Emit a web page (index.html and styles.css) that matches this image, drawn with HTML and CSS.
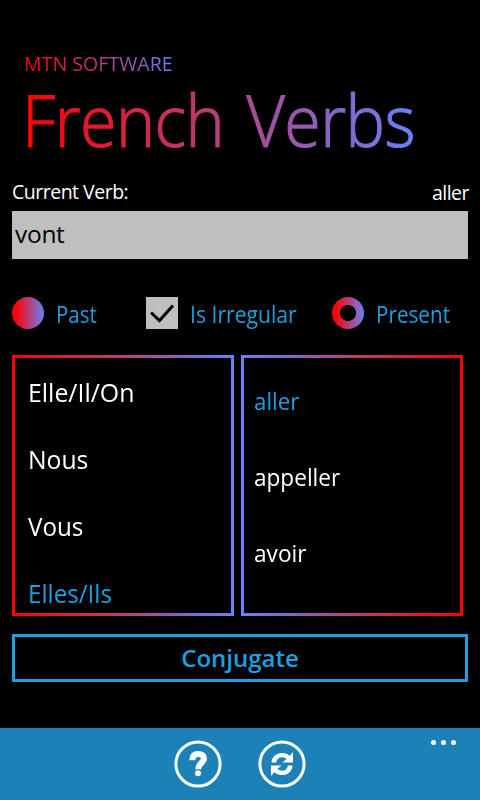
FILE: index.html
```html
<!DOCTYPE html>
<html lang="en">
<head>
<meta charset="utf-8">
<title>French Verbs</title>
<link rel="stylesheet" href="styles.css">
</head>
<body>
<main class="page">
  <header class="header">
    <div class="brand">MTN SOFTWARE</div>
    <h1 class="title">French Verbs</h1>
  </header>
  <div class="labels"><span class="label">Current Verb:</span><span class="current">aller</span></div>
  <div class="field"><span class="field-text">vont</span></div>
  <div class="options">
    <div class="option past"><span class="radio"></span><span class="t-past">Past</span></div>
    <div class="option irregular">
      <svg class="check" viewBox="0 0 32 32"><path d="M5 15.5 13.5 23.5 27 8.5" fill="none" stroke="#000" stroke-width="3"/></svg>
      <span class="t-irregular">Is Irregular</span>
    </div>
    <div class="option"><span class="radio ring"></span><span class="t-present">Present</span></div>
  </div>
  <div class="lists">
    <ul class="list pronouns">
      <li class="p1">Elle/Il/On</li><li class="p2">Nous</li><li class="p3">Vous</li><li class="p4 selected">Elles/Ils</li>
    </ul>
    <ul class="list verbs">
      <li class="v1 selected">aller</li><li class="v2">appeller</li><li class="v3">avoir</li>
    </ul>
  </div>
  <div class="button"><span>Conjugate</span></div>
</main>
<footer class="appbar">
  <svg class="icon" viewBox="0 0 48 48"><circle cx="24" cy="24" r="22.1" fill="none" stroke="#fff" stroke-width="3"/><path d="M18.300 20.200C18.400 15.800 20.600 13.900 24.200 13.900C28 13.900 30 15.700 30 18.500C30 23 24.200 22.800 24.200 29.300" fill="none" stroke="#fff" stroke-width="6"/><circle cx="24" cy="33.300" r="3" fill="#fff"/></svg>
  <svg class="icon" viewBox="0 0 48 48"><circle cx="24" cy="24" r="22.1" fill="none" stroke="#fff" stroke-width="3"/><g id="arrow" fill="#fff"><path d="M13.500 22.600C13.800 16.600 18.500 13 24 13C27.200 13 30 14.200 31.800 15.800L35 12V22.500H24.300L28.600 19.200C27.400 18 26 17.300 24 17.300C20.800 17.300 18.600 19.300 18.200 22.600Z"/></g><use href="#arrow" transform="rotate(180 24 24)"/></svg>
  <div class="dots"><i></i><i></i><i></i></div>
</footer>
</body>
</html>
```
FILE: styles.css
```css
* { box-sizing: border-box; }
body {
  margin: 0;
  width: 480px;
  height: 800px;
  display: flex;
  flex-direction: column;
  background: #000;
  color: #fff;
  font-family: "Open Sans", "Noto Sans", sans-serif;
  white-space: nowrap;
  overflow: hidden;
}
.page { flex: 1; padding: 50px 12px 0; }
.header { height: 128px; padding-left: 12px; display: flex; flex-direction: column; align-items: flex-start; }
.brand, .title {
  background: linear-gradient(90deg, #f00, #6a80f8);
  -webkit-background-clip: text;
  background-clip: text;
  color: transparent;
}
.brand { font-size: 19.6px; line-height: 28px; }
.title {
  margin: 2px 0 0 -2px;
  font-size: 71px;
  line-height: 80px;
  font-weight: 300;
  letter-spacing: -0.6px;
  word-spacing: 6px;
  -webkit-text-stroke: 1.2px transparent;
  transform: scaleX(0.935);
  transform-origin: left;
}
.labels { display: flex; justify-content: space-between; height: 33px; font-size: 19.5px; line-height: 28px; }
.label { letter-spacing: -0.5px; }
.current { padding-top: 1px; letter-spacing: -0.5px; margin-right: -1px; }
.field { height: 48px; padding-left: 3px; background: #bfbfbf; color: #000; font-size: 24.5px; line-height: 45px; letter-spacing: -0.3px; }
.options { display: flex; margin-top: 38px; height: 32px; color: #1ba1e2; font-size: 23.5px; line-height: 34px; }
.option { display: flex; gap: 12px; }
.past { width: 134px; }
.irregular { width: 186px; }
.radio { width: 32px; height: 32px; border-radius: 50%; background: linear-gradient(90deg, #f00 10%, #6a80f8); }
.ring { background: radial-gradient(circle, #000 7.700px, transparent 8.300px), linear-gradient(90deg, #f00 10%, #6a80f8); }
.check { width: 32px; height: 32px; background: #bfbfbf; }
.t-past, .t-irregular, .t-present, .list li { transform-origin: left; }
.t-past { transform: scaleX(0.87); }
.t-irregular { transform: scaleX(0.9); }
.t-present { transform: scaleX(0.88); }
.lists { display: flex; gap: 7px; margin-top: 26px; }
.list {
  width: 222px;
  height: 261px;
  margin: 0;
  list-style: none;
  overflow: hidden;
  border: 3px solid;
}
.pronouns { padding: 1px 0 0 13px; border-image: linear-gradient(90deg, #f00, #6a80f8) 3; font-size: 26px; line-height: 67px; }
.verbs { padding: 5px 0 0 10px; border-image: linear-gradient(90deg, #6a80f8, #f00) 3; font-size: 24.5px; line-height: 76px; }
.p1 { transform: scaleX(0.957); }
.p2 { transform: scaleX(0.95); }
.p3 { transform: scaleX(0.93); }
.p4 { transform: scaleX(0.93); }
.v1 { transform: scaleX(0.91); }
.v2 { transform: scaleX(0.922); }
.v3 { transform: scaleX(0.925); }
.selected { color: #1ba1e2; }
.button {
  margin-top: 18px;
  height: 48px;
  border: 3px solid #1ba1e2;
  color: #1ba1e2;
  text-align: center;
  font-size: 24px;
  line-height: 42px;
  font-weight: 600;
}
.appbar { height: 72px; background: #1b81b7; display: flex; padding: 12px 24px 0 174px; gap: 36px; }
.icon { width: 48px; height: 48px; }
.dots { display: flex; gap: 5px; margin-left: auto; }
.dots i { width: 5px; height: 5px; border-radius: 50%; background: #fff; }
```
